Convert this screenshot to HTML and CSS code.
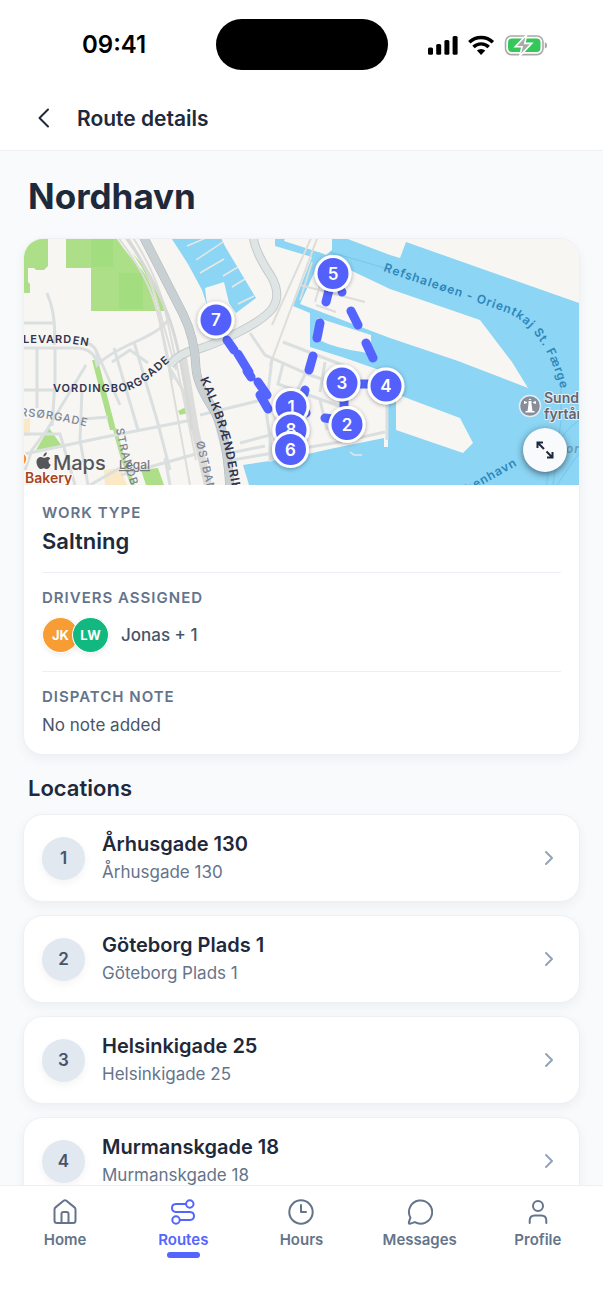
FILE: index.html
```html
<!DOCTYPE html>
<html lang="en">
<head>
<meta charset="utf-8">
<meta name="viewport" content="width=device-width, initial-scale=1">
<title>Route details</title>
<link rel="stylesheet" href="styles.css">
</head>
<body>
<div class="app">
  <div class="status">
    <span class="status-time">09:41</span>
    <span class="island"></span>
    <span class="status-icons">
      <svg width="120" height="22" viewBox="427 33 120 22" aria-hidden="true">
        <g fill="#000"><rect x="428" y="46.500" width="5" height="7.300" rx="1.500"/><rect x="436.200" y="43" width="5" height="10.800" rx="1.500"/><rect x="444.400" y="39" width="5" height="14.800" rx="1.500"/><rect x="452.600" y="35" width="5" height="18.800" rx="1.500"/></g>
        <g fill="none" stroke="#000" stroke-width="3.400"><path d="M469.300 41.300a16.800 16.800 0 0 1 23.600 0"/><path d="M473.500 46a10.800 10.800 0 0 1 15.200 0"/></g>
        <path d="M476.900 49.600a6 6 0 0 1 8.400 0l-4.200 4.400z" fill="#000"/>
        <rect x="505.500" y="35" width="37.500" height="18.600" rx="6" fill="#fff" stroke="#a9a9a9" stroke-width="1.600"/>
        <rect x="508" y="37.500" width="32.500" height="13.600" rx="4" fill="#34c759"/>
        <path d="M544.800 41.200q2.400 1 2.400 3.200t-2.400 3.200z" fill="#a9a9a9"/>
        <path d="M526.600 33.800l-11.300 12h6.700l-2.200 9.200 12-12.600h-7z" fill="#aaa" stroke="#fff" stroke-width="1.600"/>
      </svg>
    </span>
  </div>
  <header class="topbar">
    <button class="back" type="button" aria-label="Back"><svg width="24" height="24" viewBox="0 0 24 24"><path d="M16 3.500L7.500 12l8.500 8.500"/></svg></button>
    <span class="topbar-title">Route details</span>
  </header>
  <main class="content">
    <h1>Nordhavn</h1>
    <section class="card summary">
      <div class="map">
        <svg class="map-art" viewBox="23 239 557 246" preserveAspectRatio="xMidYMid slice" role="img" aria-label="Route map">
          <defs>
            <path id="p-vord" d="M53 392H115C140 392 150 377 180 353"/>
            <path id="p-kalk" d="M200 379Q220 424 226 455T236 512"/>
            <path id="p-rsor" d="M20 416Q55 418 92 428"/>
            <path id="p-lev" d="M23 343H68L100 348"/>
            <path id="p-strand" d="M116 429Q120 455 136 500"/>
            <path id="p-ost" d="M196 442L210 500"/>
            <path id="p-ferry" d="M383 271C430 287 470 300 508 313Q545 330 561 390"/>
            <path id="p-hav" d="M468 493L530 458"/>
            <filter id="pin-shadow" x="-50%" y="-50%" width="200%" height="200%"><feDropShadow dx="0" dy="1" stdDeviation="2" flood-opacity=".35"/></filter>
          </defs>
          <rect x="0" y="200" width="620" height="320" fill="#f8f6f2"/>
          <g fill="#addf88">
            <path d="M20 236H48V266L44 270H36L34 268H28V282L30 284V293H20z"/>
            <path d="M66 236H115Q126 253 142 270Q150 280 155 300L158 311H91V268H66z"/>
            <path d="M128 248Q151 275 159 311H166Q158 287 145 268z"/>
            <path d="M49 428L62 446L36 450zM92 360H98L116 430L110 430zM141 470L158 468 164 485H146zM178 411L186 407 188 413 180 415z"/>
          </g>
          <path d="M91 238H113V267H91zM119 273H143V309H119z" fill="#9cdb7c" opacity=".65"/>
          <path d="M104 470l16-2 7 17h-22zM20 420l10-2v18H20z" fill="#fbe8c4"/>
          <path d="M115 429Q122 460 133 485" fill="none" stroke="#b6df9b" stroke-width="4"/>
          <g fill="#8cd5f4">
            <path d="M170 236L188 264L202 290L207 305L205 288L224 282L229 303L236 313L256 298L226 248L220 236z"/>
            <path d="M275 236V246L312 257L293 306L310 313V347L345 358L385 372L388 374V447L384 447V438L330 449L290 458L243 465L249 485V490H590V307L406 242L400 258L390 255L345 238L332 236V250L326 255L285 238z"/>
          </g>
          <path d="M286 236H325L328 248L318 252L284 241z" fill="#f8f6f2"/>
          <g fill="#f8f6f2">
            <path d="M319 262L350 270L390 289L480 320L512 362L528 388L458 361L390 338L300 304z"/>
            <path d="M318 318L371 335V354L362 352Q335 348 319 340z"/>
            <path d="M396 394L460 418L473 443L463 453L396 430z"/>
          </g>
          <g stroke="#e9e8e4" stroke-width="1.500" fill="none">
            <path d="M187 246l19-8M196 260l27-18M200 273l24-14M223 276l15-9M232 287l13-8M238 304l16-8M350 452l4 3 8 0"/>
          </g>
          <g fill="none" stroke="#dadfe0" stroke-width="3">
            <path d="M20 323H55M47 293Q57 317 54 345M20 348H75Q95 348 97 365Q108 354 135 342T167 321M55 347V382L52 426M37 347V408M20 390H56M86 365L47 430L32 450L25 470M96 350L120 405M114 348L138 430M134 342L157 420L170 470M158 311L172 380M20 434L60 434L75 485M20 455L100 438L192 420M82 391L80 440L88 485M83 419L108 417M97 365Q100 345 85 343M112 362L130 350L148 363M169 367L184 392L188 412M191 420L200 455M121 475L196 454M165 458L170 485M90 485L120 468"/>
            <path d="M200 415L270 398M250 333L265 355L310 375L340 385M272 358L266 410L273 460M283 342L345 366M283 364L278 384L350 410M310 364L295 395M325 362L320 392M232 460L340 442L385 432M240 443L270 435V462M235 452L265 446M215 420L228 470M320 400L327 430M387 380V440"/>
          </g>
          <g fill="none" stroke="#ddddda" stroke-width="2"><path d="M117 236Q140 266 150 290T170 375L190 485M124 236Q146 265 153 288T176 370M132 236Q157 275 165 310T196 460M312 236L272 325M318 236L270 365M300 285L365 302M316 305L336 312M312 262L300 300M322 278L315 302"/></g>
          <path d="M182 352L195 430L208 485" fill="none" stroke="#dcdcda" stroke-width="8"/>
          <path d="M126 236Q155 280 168 315T192 430" fill="none" stroke="#d7d9d8" stroke-width="3"/>
          <g fill="none" stroke-linejoin="round">
            <path d="M253 236Q255 252 271 276Q282 295 272 309Q263 320 239 332T199 349Q180 352 170 365" stroke="#c4cbcd" stroke-width="9"/>
            <path d="M253 236Q255 252 271 276Q282 295 272 309Q263 320 239 332T199 349Q180 352 170 365" stroke="#dfe4e4" stroke-width="7"/>
            <path d="M143 236L183 314Q195 338 196 368Q197 384 212 407T230 490" stroke="#afb7ba" stroke-width="9"/>
            <path d="M143 236L183 314Q195 338 196 368Q197 384 212 407T230 490" stroke="#c9d0d3" stroke-width="8"/>
          </g>
          <g fill="none" stroke="#6dbce5" stroke-width="1" opacity=".6"><path d="M330 252L385 268M561 375V420L553 485M580 420Q550 438 546 490M590 437L557 485"/></g>
          <g fill="none" stroke="#5364ff" stroke-width="9" stroke-linecap="round">
            <path d="M227 340L234 350M238 354L249 372M247 371L251 377M258 382L267 395M260 395L268 409M330 286L326 302M320 323L317 338M313 356L309 370M305 390L304 394M303 407L306 413M342 292L342 292M351 311L358 325M366 343L373 358M361 384L367 384M344 401V406M325 418L332 419"/>
          </g>
          <g class="street">
            <text><textPath href="#p-vord">VORDINGBORGGADE</textPath></text>
            <text class="street-main"><textPath href="#p-kalk">KALKBRÆNDERIHAVN</textPath></text>
            <text class="street-light"><textPath href="#p-rsor">RSØRGADE</textPath></text>
            <text><textPath href="#p-lev">LEVARDEN</textPath></text>
            <text class="street-light"><textPath href="#p-strand">STRANDBOU</textPath></text>
            <text class="street-light"><textPath href="#p-ost">ØSTBANE</textPath></text>
          </g>
          <g class="sea"><text><textPath href="#p-ferry">Refshaleøen - Orientkaj St. Færgen</textPath></text><text><textPath href="#p-hav">benhavn</textPath></text><text class="sea-faint" x="566" y="453">or</text></g>
          <g class="place"><text x="544" y="403">Sund</text><text x="544" y="419">fyrtårn</text></g>
          <circle cx="530" cy="406" r="10.500" fill="#878d99" stroke="#e2edf4" stroke-width="1.500"/>
          <path d="M528.500 401h3v3l1 7h2v1.500h-9V411h2l1-7zM524 401l3 1v1l-3 1zM536 401l-3 1v1l3 1zM528.500 400l1.500-1.500 1.500 1.500z" fill="#fff"/>
          <circle cx="20" cy="459" r="7" fill="#ff8f32" stroke="#fff" stroke-width="1.500"/>
          <text class="bakery" x="25" y="483">Bakery</text>
          <path d="M46 457.500c1.500-.9 3.600-.3 4.300 1-2.700 1.500-2.200 5 .5 6.200-.8 2.200-2.300 4.400-3.900 4.400-1.300 0-1.700-.8-3.200-.8s-2 .8-3.200.8c-1.900 0-4-4.100-4-7 0-4.400 4-6 6.300-4.500 1 .6 1.900.5 3.200-.1zM43.300 456.500c-.1-2 1.500-4 3.500-4.300.3 2.200-1.500 4.200-3.500 4.300z" fill="#55565b"/>
          <text class="brand" x="53" y="470">Maps</text>
          <text class="legal" x="119" y="469">Legal</text>
          <g class="pins" filter="url(#pin-shadow)">
            <circle cx="333" cy="273.500" r="17"/><circle cx="216" cy="320" r="17"/><circle cx="342" cy="383" r="17"/><circle cx="386" cy="386" r="17"/><circle cx="347" cy="424.500" r="17"/>
          </g>
          <g class="pin-text"><text x="333" y="279.500">5</text><text x="216" y="326">7</text><text x="342" y="389">3</text><text x="386" y="392">4</text><text x="347" y="430.500">2</text></g>
          <g class="pins" filter="url(#pin-shadow)"><circle cx="291" cy="406.500" r="17"/></g><g class="pin-text"><text x="291" y="412.500">1</text></g>
          <g class="pins" filter="url(#pin-shadow)"><circle cx="291" cy="430" r="17"/></g><g class="pin-text"><text x="291" y="436">8</text></g>
          <g class="pins" filter="url(#pin-shadow)"><circle cx="290.500" cy="449.500" r="17"/></g><g class="pin-text"><text x="290.500" y="455.500">6</text></g>
        </svg>
        <button class="expand" type="button" aria-label="Expand map"><svg width="20" height="20" viewBox="0 0 20 20"><path d="M9 9L3 3M2.500 8V2.500H8M11.500 11.500L17 17M12 17.500h5.500V12"/></svg></button>
      </div>
      <div class="details">
        <div class="detail"><h2 class="label">WORK TYPE</h2><p class="value strong">Saltning</p></div>
        <div class="detail roomy"><h2 class="label">DRIVERS ASSIGNED</h2>
          <div class="drivers"><span class="avatars"><span class="avatar orange">JK</span><span class="avatar green">LW</span></span><span class="driver-name">Jonas + 1</span></div>
        </div>
        <div class="detail"><h2 class="label">DISPATCH NOTE</h2><p class="value">No note added</p></div>
      </div>
    </section>
    <h2 class="locations-title">Locations</h2>
    <div class="locations">
      <a class="card stop" href="#"><span class="stop-number">1</span><span class="stop-text"><strong>Århusgade 130</strong><span>Århusgade 130</span></span><svg class="chevron" width="12" height="20" viewBox="0 0 12 20"><path d="M3 4l6 6-6 6"/></svg></a>
      <a class="card stop" href="#"><span class="stop-number">2</span><span class="stop-text"><strong>Göteborg Plads 1</strong><span>Göteborg Plads 1</span></span><svg class="chevron" width="12" height="20" viewBox="0 0 12 20"><path d="M3 4l6 6-6 6"/></svg></a>
      <a class="card stop" href="#"><span class="stop-number">3</span><span class="stop-text"><strong>Helsinkigade 25</strong><span>Helsinkigade 25</span></span><svg class="chevron" width="12" height="20" viewBox="0 0 12 20"><path d="M3 4l6 6-6 6"/></svg></a>
      <a class="card stop" href="#"><span class="stop-number">4</span><span class="stop-text"><strong>Murmanskgade 18</strong><span>Murmanskgade 18</span></span><svg class="chevron" width="12" height="20" viewBox="0 0 12 20"><path d="M3 4l6 6-6 6"/></svg></a>
    </div>
  </main>
  <nav class="tabs">
    <a class="tab" href="#"><svg viewBox="0 0 26 26"><path d="M2.500 10.500Q2.500 9.200 3.500 8.400L11.600 1.800Q13 .8 14.400 1.800L22.500 8.400Q23.500 9.200 23.500 10.500V21.500Q23.500 24 21 24H5Q2.500 24 2.500 21.500zM9.500 24V15Q9.500 13 11.500 13H14.500Q16.500 13 16.500 15V24"/></svg><span>Home</span></a>
    <a class="tab active" href="#" aria-current="page"><svg viewBox="0 0 26 26"><circle cx="19.800" cy="5" r="3.700"/><circle cx="6" cy="21" r="3.700"/><path d="M16 5H6Q2 5.200 2 9T6 13H20Q24 13.200 24 17T20 21H10"/></svg><span>Routes</span></a>
    <a class="tab" href="#"><svg viewBox="0 0 26 26"><circle cx="13" cy="13" r="11.700"/><path d="M13 6v7h5"/></svg><span>Hours</span></a>
    <a class="tab" href="#"><svg viewBox="0 0 26 26"><path d="M3.400 18.600A11.600 11.600 0 1 1 7.800 23.100L3.400 24.600Q1.500 25 1.900 23.100z"/></svg><span>Messages</span></a>
    <a class="tab" href="#"><svg viewBox="0 0 26 26"><circle cx="13" cy="7" r="5"/><path d="M4.700 24v-2.500q0-5 5-5h6.600q5 0 5 5V24"/></svg><span>Profile</span></a>
  </nav>
</div>
</body>
</html>
```
FILE: styles.css
```css
* { box-sizing: border-box; }
body { margin: 0; background: #f8fafc; color: #1e293b; font-family: Inter, "Liberation Sans", sans-serif; }
h1, h2, p { margin: 0; }
a { color: inherit; text-decoration: none; }
button { border: 0; padding: 0; background: none; color: inherit; cursor: pointer; }
svg { display: block; fill: none; }

.app { display: flex; flex-direction: column; height: 100vh; overflow: hidden; }

.status { flex: none; display: grid; grid-template-columns: 1fr auto 1fr; align-items: center; padding: 19px 56px 0; background: #fff; color: #000; }
.status-time { padding-left: 26px; font-size: 24px; font-weight: 600; }
.island { width: 172px; height: 51px; border-radius: 26px; background: #000; }
.status-icons { justify-self: end; }

.topbar { flex: none; display: flex; align-items: center; gap: 21px; height: 81px; padding: 16px 32px 0; background: #fff; border-bottom: 1px solid #eceff3; }
.back svg { stroke: #1e293b; stroke-width: 2; stroke-linecap: round; stroke-linejoin: round; }
.topbar-title { font-size: 21px; font-weight: 600; }

.content { flex: 1; min-height: 0; overflow: hidden; padding: 22px 23px 0; }
h1 { padding: 0 5px; font-size: 35px; line-height: 46px; font-weight: 700; }
.card { background: #fff; border: 1px solid #eef1f4; border-radius: 20px; box-shadow: 0 4px 12px rgba(15, 23, 42, .05); }
.summary { margin-top: 19px; overflow: hidden; }

.map { position: relative; height: 246px; }
.map-art { width: 100%; height: 100%; }
.street { font-size: 11px; font-weight: 600; letter-spacing: 1px; fill: #30344e; }
.street-main { font-size: 12px; }
.street-light { fill: #7b8494; font-weight: 500; }
.sea { font-size: 12px; font-weight: 600; letter-spacing: 1px; fill: #2c86bb; }
.sea-faint { font-style: italic; fill: #6b9fb8; }
.place { font-size: 14px; font-weight: 600; fill: #606675; stroke: #e2edf4; stroke-width: 2px; paint-order: stroke; }
.bakery { font-size: 14px; font-weight: 600; fill: #a9441c; stroke: #fff; stroke-width: 2px; paint-order: stroke; }
.brand { font-size: 20px; font-weight: 500; fill: #55565b; }
.legal { font-size: 12px; font-weight: 500; fill: #77787b; text-decoration: underline; }
.pins { fill: #5260fb; stroke: #fff; stroke-width: 3px; }
.pin-text { font-size: 17px; font-weight: 600; fill: #fff; text-anchor: middle; }
.expand { position: absolute; right: 12px; bottom: 13px; display: grid; place-items: center; width: 44px; height: 44px; border-radius: 50%; background: #f8fafc; box-shadow: 0 2px 7px rgba(15, 23, 42, .6); }
.expand svg { stroke: #1e293b; stroke-width: 2; }

.details { padding: 3px 18px 0; }
.detail { display: flex; flex-direction: column; gap: 6px; padding: 16px 0 18px; }
.detail:last-child { padding-bottom: 16px; }
.detail + .detail { border-top: 1px solid #eceff3; }
.roomy { gap: 10px; }
.label { font-size: 15px; line-height: 18px; font-weight: 600; letter-spacing: 1px; color: #64748b; }
.value { font-size: 17px; line-height: 26px; color: #475569; }
.strong { font-size: 22px; font-weight: 600; color: #1e293b; }
.drivers { display: flex; align-items: center; gap: 12px; font-size: 17px; font-weight: 500; color: #475569; }
.avatars { display: flex; }
.avatar { display: grid; place-items: center; width: 37px; height: 36px; border: 1px solid #fff; border-radius: 50%; color: #fff; font-size: 13px; font-weight: 700; box-shadow: 0 2px 5px rgba(15, 23, 42, .08); }
.avatar + .avatar { margin-left: -7px; }
.orange { background: #f79d34; }
.green { background: #11b981; }

.locations-title { padding: 0 5px; margin: 17px 0 10px; font-size: 22px; line-height: 32px; font-weight: 600; }
.locations { display: flex; flex-direction: column; gap: 13px; }
.stop { display: flex; align-items: center; gap: 17px; height: 88px; padding: 0 18px; }
.stop-number { display: grid; place-items: center; width: 43px; height: 43px; border-radius: 50%; background: #e2e8f0; color: #475569; font-size: 17px; font-weight: 600; box-shadow: 0 3px 8px rgba(15, 23, 42, .05); }
.stop-text { flex: 1; display: flex; flex-direction: column; font-size: 17px; line-height: 28px; color: #64748b; }
.stop-text strong { font-size: 20px; font-weight: 600; color: #1e293b; }
.chevron { margin-right: 6px; stroke: #94a3b8; stroke-width: 2; stroke-linecap: round; stroke-linejoin: round; }

.tabs { flex: none; display: grid; grid-template-columns: repeat(5, 1fr); height: 125px; padding: 13px 6px 0; background: #fff; border-top: 1px solid #eceff3; }
.tab { display: flex; flex-direction: column; align-items: center; font-size: 15px; line-height: 20px; font-weight: 600; color: #64748b; }
.tab svg { width: 26px; height: 26px; margin-bottom: 5px; stroke: currentColor; stroke-width: 2; stroke-linecap: round; stroke-linejoin: round; }
.active { color: #5364ff; }
.active::after { content: ""; width: 33px; height: 6px; margin-top: 2px; border-radius: 3px; background: #5364ff; }
```
